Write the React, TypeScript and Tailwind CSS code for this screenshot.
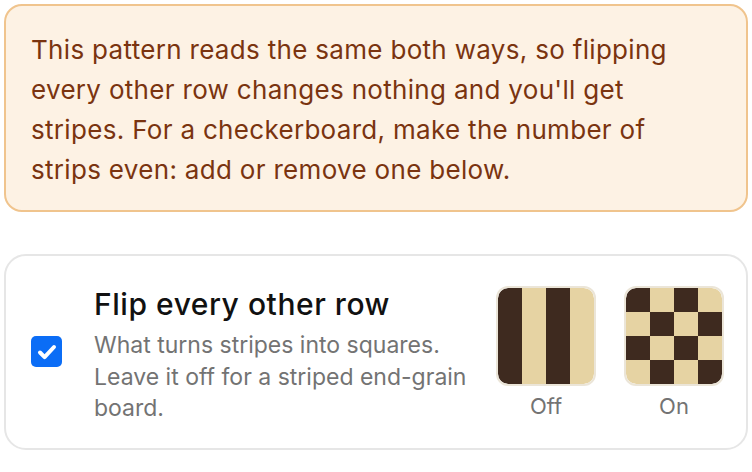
const DARK = 'bg-[#3e2a1f]';
const LIGHT = 'bg-[#e6d3a3]';

function Swatch({ checker }: { checker: boolean }) {
  const cells = [];
  for (let r = 0; r < 4; r++) {
    for (let c = 0; c < 4; c++) {
      const dark = checker ? (r + c) % 2 === 0 : c % 2 === 0;
      cells.push(<div key={`${r}-${c}`} className={dark ? DARK : LIGHT} />);
    }
  }
  return (
    <div className="w-[100px] h-[100px] rounded-[12px] border-2 border-[#ebe5d8] overflow-hidden">
      <div className="grid grid-cols-4 grid-rows-4 w-full h-full rounded-[10px] overflow-hidden">
        {cells}
      </div>
    </div>
  );
}

export default function App() {
  return (
    <div className="p-1 bg-white font-['Inter',sans-serif]">
      <div className="rounded-[18px] border-2 border-[#f0c48d] bg-[#fdf2e4] px-[25px] pt-[24px] pb-[20px]">
        <p className="text-[26px] leading-[40px] tracking-[0.012em] text-[#7a3410]">
          This pattern reads the same both ways, so flipping every other row changes nothing and you'll get
          stripes. For a checkerboard, make the number of strips even: add or remove one below.
        </p>
      </div>

      <div className="mt-[42px] rounded-[22px] border-2 border-[#e6e6e6] flex items-center pl-[25px] pr-[22px] py-[23px]">
        <div className="w-[31px] h-[31px] rounded-[5px] bg-[#0b6df6] flex items-center justify-center shrink-0">
          <svg width="22" height="22" viewBox="0 0 22 22" fill="none">
            <path d="M4 11.5l4.6 4.6L18 6" stroke="white" strokeWidth="4" strokeLinecap="round" strokeLinejoin="round" />
          </svg>
        </div>

        <div className="ml-[32px] w-[380px] pt-[7px]">
          <h3 className="text-[30px] leading-[36px] font-medium tracking-[0.018em] text-[#111111]">Flip every other row</h3>
          <p className="mt-2 text-[23px] leading-[31.5px] text-[#737373]">
            What turns stripes into squares. Leave it off for a striped end-grain board.
          </p>
        </div>

        <div className="ml-auto flex gap-[28px] pt-[3px]">
          <div className="flex flex-col items-center">
            <Swatch checker={false} />
            <span className="mt-[5px] text-[22px] leading-[30px] text-[#737373]">Off</span>
          </div>
          <div className="flex flex-col items-center">
            <Swatch checker={true} />
            <span className="mt-[5px] text-[22px] leading-[30px] text-[#737373]">On</span>
          </div>
        </div>
      </div>
    </div>
  );
}
